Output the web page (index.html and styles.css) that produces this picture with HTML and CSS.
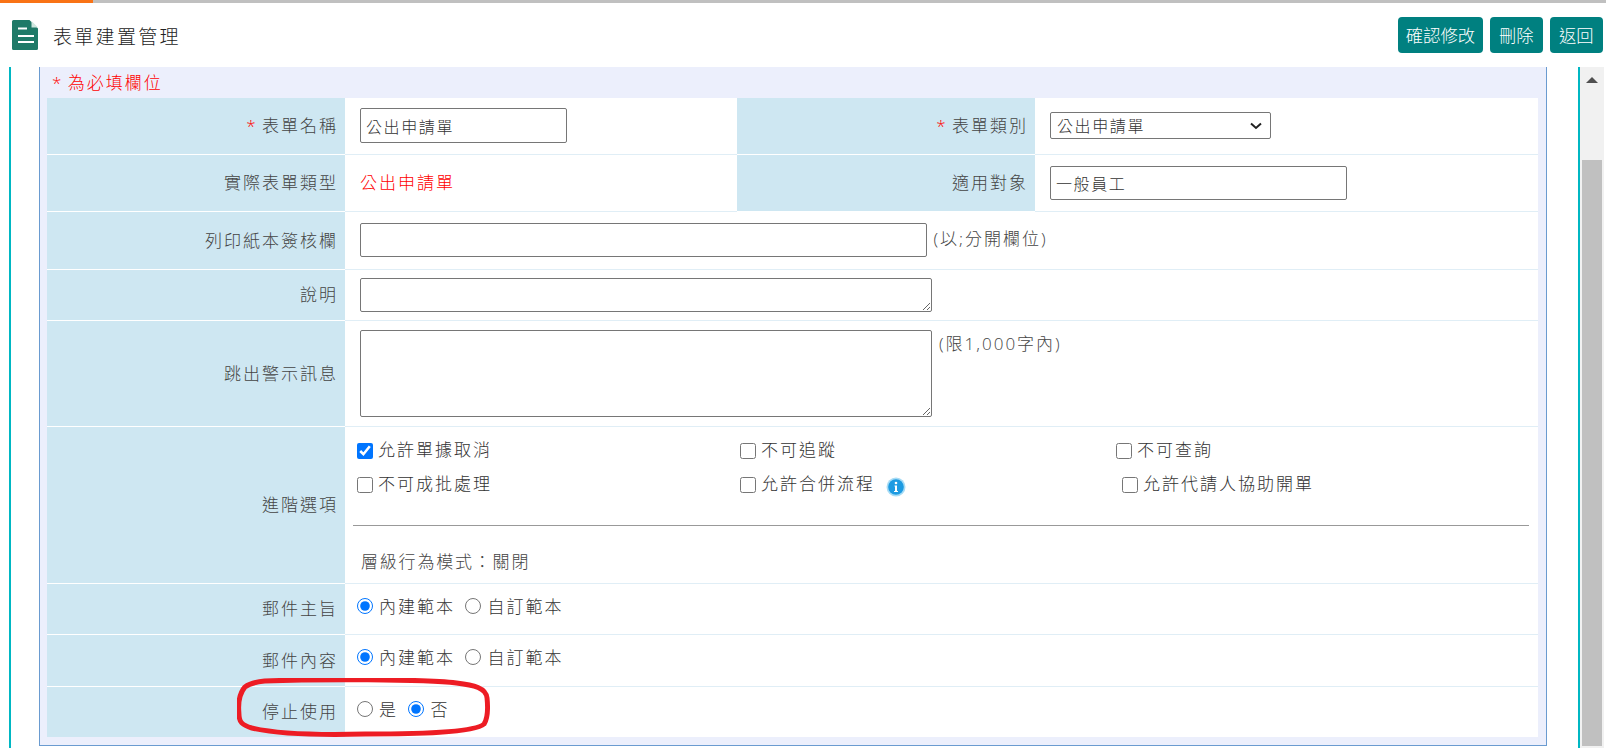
FILE: index.html
```html
<!DOCTYPE html>
<html lang="zh-Hant">

<head>
    <meta charset="UTF-8">
    <title>表單建置管理</title>
    <link rel="stylesheet" href="styles.css">
</head>

<body>
    <div class="progress"><div class="progress-done"></div></div>

    <header class="topbar">
        <div class="page-title">
            <svg class="page-icon" viewBox="0 0 26 30" width="26" height="30">
                <path d="M1.500 0H17.500L26 8.500V28.500A1.500 1.500 0 0 1 24.500 30H1.500A1.500 1.500 0 0 1 0 28.500V1.500A1.500 1.500 0 0 1 1.500 0Z" fill="#1f7a68"/>
                <path d="M19.500 1L26 7.500H19.500Z" fill="#cfe6df"/>
                <path d="M6 8.500H15M6 16H22M6 22H22" stroke="#fff" stroke-width="2" fill="none"/>
            </svg>
            <span class="page-name">表單建置管理</span>
        </div>
        <div class="actions">
            <button class="btn">確認修改</button>
            <button class="btn">刪除</button>
            <button class="btn">返回</button>
        </div>
    </header>

    <div class="workspace">
        <div class="frame">
            <div class="panel">
                <div class="required-note"><span class="star">*</span> 為必填欄位</div>
                <table class="form-table">
                    <colgroup>
                        <col class="col-label">
                        <col class="col-value">
                        <col class="col-label">
                        <col>
                    </colgroup>
                    <tr class="row-name">
                        <th><span class="star">*</span> 表單名稱</th>
                        <td><input class="field field-name" type="text" value="公出申請單"></td>
                        <th><span class="star">*</span> 表單類別</th>
                        <td>
                            <select class="field field-select">
                                <option>公出申請單</option>
                            </select>
                        </td>
                    </tr>
                    <tr class="row-type">
                        <th>實際表單類型</th>
                        <td class="red-text">公出申請單</td>
                        <th>適用對象</th>
                        <td><input class="field field-target" type="text" value="一般員工"></td>
                    </tr>
                    <tr class="row-print">
                        <th>列印紙本簽核欄</th>
                        <td colspan="3"><input class="field field-print" type="text"> <span class="hint">(以;分開欄位)</span></td>
                    </tr>
                    <tr class="row-desc">
                        <th>說明</th>
                        <td colspan="3"><textarea class="field area-desc"></textarea></td>
                    </tr>
                    <tr class="row-alert">
                        <th>跳出警示訊息</th>
                        <td colspan="3">
                            <div class="alert-wrap">
                                <textarea class="field area-alert"></textarea>
                                <span class="hint">(限1,000字內)</span>
                            </div>
                        </td>
                    </tr>
                    <tr class="row-options">
                        <th>進階選項</th>
                        <td colspan="3">
                            <div class="options">
                                <label class="opt"><input type="checkbox" checked>允許單據取消</label>
                                <label class="opt"><input type="checkbox">不可追蹤</label>
                                <label class="opt"><input type="checkbox">不可查詢</label>
                                <label class="opt"><input type="checkbox">不可成批處理</label>
                                <label class="opt">
                                    <input type="checkbox">允許合併流程
                                    <svg class="info" viewBox="0 0 20 20" width="20" height="20">
                                        <circle cx="10" cy="10" r="9.500" fill="#a8dcf5"/>
                                        <circle cx="10" cy="10" r="7.800" fill="#1d9be2"/>
                                        <circle cx="10" cy="6" r="1.300" fill="#fff"/>
                                        <path d="M8.500 8.500H11V14H12V15H8V14H9V9.500H8.500Z" fill="#fff"/>
                                    </svg>
                                </label>
                                <label class="opt opt-shift"><input type="checkbox">允許代請人協助開單</label>
                            </div>
                            <hr class="divider">
                            <div class="mode">層級行為模式：關閉</div>
                        </td>
                    </tr>
                    <tr class="row-mail">
                        <th>郵件主旨</th>
                        <td colspan="3" class="radio-cell">
                            <label class="rad"><input type="radio" name="subject" checked>內建範本</label>
                            <label class="rad"><input type="radio" name="subject">自訂範本</label>
                        </td>
                    </tr>
                    <tr class="row-mail">
                        <th>郵件內容</th>
                        <td colspan="3" class="radio-cell">
                            <label class="rad"><input type="radio" name="content" checked>內建範本</label>
                            <label class="rad"><input type="radio" name="content">自訂範本</label>
                        </td>
                    </tr>
                    <tr class="row-stop">
                        <th>停止使用</th>
                        <td colspan="3" class="radio-cell">
                            <label class="rad"><input type="radio" name="stop">是</label>
                            <label class="rad"><input type="radio" name="stop" checked>否</label>
                        </td>
                    </tr>
                </table>
                <svg class="highlight" viewBox="0 0 256 60" width="253" height="60" preserveAspectRatio="none">
                    <path d="M28 3C80 1 190 1 222 5C240 7 252 10 253 20C254 30 254 40 250 46C240 55 180 56 130 56C90 57 40 56 15 50C5 47 2 44 2 36C1 26 2 16 8 9C12 6 18 4 28 3Z" fill="none" stroke="#ed1c24" stroke-width="5"/>
                </svg>
            </div>
        </div>
        <div class="scrollbar">
            <div class="scroll-up"></div>
            <div class="scroll-thumb"></div>
        </div>
    </div>
</body>

</html>
```
FILE: styles.css
```css
html,
body {
    margin: 0;
    height: 100%;
    overflow: hidden;
    background-color: #fff;
}

body {
    font-family: "Open Sans", "Noto Sans CJK TC", sans-serif;
    font-size: 17px;
    font-weight: 300;
    color: #333;
}

.progress {
    width: 1606px;
    height: 3px;
    background-color: #c0c0c0;
}

.progress-done {
    width: 93px;
    height: 3px;
    background-color: #f97316;
}

.topbar {
    display: flex;
    justify-content: space-between;
    align-items: center;
    height: 64px;
    padding: 0 11px 0 12px;
}

.page-title {
    display: flex;
    align-items: center;
    gap: 15px;
    font-size: 19px;
    letter-spacing: 2.300px;
    color: #222;
}

.page-name {
    padding-top: 2px;
}

.page-icon {
    display: block;
}

.actions {
    display: flex;
    gap: 6.500px;
}

.btn {
    min-width: 53.500px;
    height: 36px;
    padding: 2px 8px 0;
    border: none;
    border-radius: 4px;
    background-color: #008080;
    color: #fff;
    font-family: inherit;
    font-size: 17.300px;
    font-weight: 300;
    line-height: 34px;
}

.workspace {
    display: flex;
    height: 681px;
    padding-left: 9px;
}

.frame {
    width: 1571px;
    box-sizing: border-box;
    padding-left: 28px;
    border-left: 2px solid #00b7c3;
    border-right: 2px solid #00b7c3;
}

.panel {
    position: relative;
    width: 1508px;
    height: 679px;
    box-sizing: border-box;
    padding: 0 7px;
    background-color: #eceffc;
    border: 1px solid #6a9bd0;
    border-top: none;
}

.required-note {
    height: 31px;
    padding-left: 5px;
    line-height: 31px;
    letter-spacing: 2px;
    color: #f00;
}

.form-table {
    width: 1491px;
    table-layout: fixed;
    border-collapse: collapse;
    background-color: #fff;
    letter-spacing: 2px;
}

.col-label {
    width: 298px;
}

.col-value {
    width: 392px;
}

.form-table th {
    padding: 0 7px 2px 0;
    border-bottom: 1px solid #fff;
    background-color: #cee7f2;
    font-weight: 300;
    text-align: right;
    color: #444;
}

.form-table td {
    padding: 0 0 0 15px;
    border-bottom: 1px solid #e0eef6;
}

.form-table tr:last-child th,
.form-table tr:last-child td {
    border-bottom: none;
}

.row-name {
    height: 56px;
}

.row-type {
    height: 57px;
}

.row-print {
    height: 58px;
}

.row-desc {
    height: 51px;
}

.row-alert {
    height: 106px;
}

.row-options {
    height: 157px;
}

.row-mail {
    height: 51.500px;
}

.row-stop {
    height: 51px;
}

.star {
    color: #f00;
    letter-spacing: 0;
}

.form-table .red-text {
    padding-bottom: 2px;
    color: #f00;
}

.field {
    box-sizing: border-box;
    border: 1px solid #767676;
    border-radius: 2px;
    background-color: #fff;
    font-family: inherit;
    font-size: 16px;
    font-weight: 300;
    letter-spacing: 1.600px;
    color: #333;
    padding: 1px 5px;
    vertical-align: middle;
}

.field-name {
    width: 207px;
    height: 35px;
}

.field-select {
    width: 221px;
    height: 27px;
    padding-left: 6px;
    appearance: none;
    background-image: url("data:image/svg+xml,%3Csvg xmlns='http://www.w3.org/2000/svg' width='12' height='8'%3E%3Cpath d='M1 1.500L6 6L11 1.500' fill='none' stroke='%23222' stroke-width='2'/%3E%3C/svg%3E");
    background-repeat: no-repeat;
    background-position: right 8px center;
}

.field-target {
    width: 297px;
    height: 34px;
}

.field-print {
    width: 567px;
    height: 34px;
}

textarea.field {
    display: block;
}

.area-desc {
    width: 572px;
    height: 34px;
}

.alert-wrap {
    display: flex;
    gap: 7px;
    align-items: flex-start;
}

.area-alert {
    width: 572px;
    height: 87px;
}

.hint {
    color: #444;
}

.options {
    display: grid;
    grid-template-columns: 383px 376px 1fr;
    row-gap: 9px;
    margin-left: -3px;
}

.opt {
    display: flex;
    align-items: center;
    height: 25px;
    white-space: nowrap;
}

.opt input {
    width: 16px;
    height: 16px;
    margin: 4px 5px 0 0;
}

.opt-shift {
    margin-left: 6px;
}

.info {
    margin-left: 11px;
    margin-top: 8px;
}

.divider {
    width: 1176px;
    height: 1px;
    margin: 30px 0 0 -7px;
    border: none;
    background-color: #999;
}

.mode {
    margin: 22px 0 0 1px;
    letter-spacing: 1.800px;
    color: #444;
}

.form-table .radio-cell {
    padding-left: 12px;
    padding-bottom: 6px;
    white-space: nowrap;
}

.rad {
    display: inline-flex;
    align-items: center;
    margin-right: 4px;
}

.rad input {
    width: 16px;
    height: 16px;
    margin: 1px 6px 0 0;
}

.highlight {
    position: absolute;
    left: 197px;
    top: 611px;
}

.scrollbar {
    display: flex;
    flex-direction: column;
    align-items: center;
    width: 24px;
    height: 681px;
    background-color: #f1f1f1;
}

.scroll-up {
    width: 0;
    height: 0;
    margin-top: 10px;
    border: 6px solid transparent;
    border-top: none;
    border-bottom: 6px solid #505050;
}

.scroll-thumb {
    width: 20px;
    height: 586px;
    margin-top: 77px;
    background-color: #c0c0c0;
}
```
